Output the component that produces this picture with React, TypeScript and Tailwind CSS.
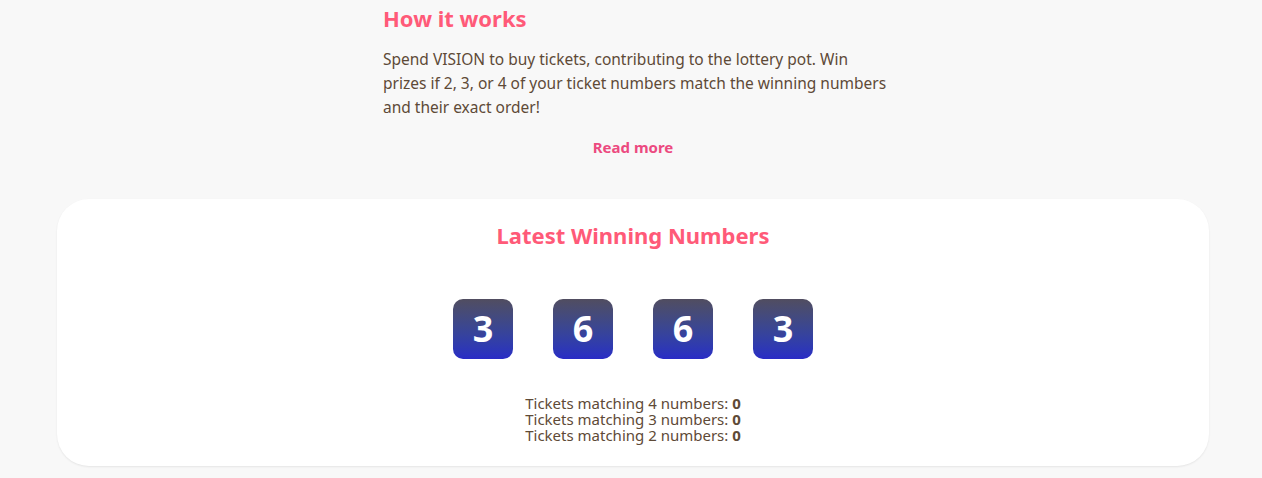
const numbers = [3, 6, 6, 3];
const matches = [4, 3, 2];

export default function App() {
  return (
    <div
      className="min-h-[478px] w-full bg-[#f8f8f8] overflow-hidden text-[#5e4a37]"
      style={{ fontFamily: "'Noto Sans', 'Open Sans', sans-serif" }}
    >
      <div className="ml-[383px] w-[500px]">
        <h2 className="pt-[2px] text-[22px] leading-[32px] font-bold text-[#ff5a78]">How it works</h2>
        <p className="mt-[13px] w-[506px] text-[15.5px] leading-[24px]">
          Spend VISION to buy tickets, contributing to the lottery pot. Win prizes if 2, 3, or 4 of your ticket numbers
          match the winning numbers and their exact order!
        </p>
        <div className="mt-[16px] text-center">
          <a className="text-[15px] leading-[24px] font-bold text-[#ec4a80]">Read more</a>
        </div>
      </div>

      <div className="ml-[57px] mt-[40px] w-[1152px] h-[267px] rounded-[32px] bg-white shadow-[0_1px_2px_rgba(0,0,0,0.08)] flex flex-col items-center">
        <h2 className="mt-[20px] text-[22px] leading-[32px] font-bold text-[#ff5a78]">
          Latest Winning Numbers
        </h2>
        <div className="mt-[48px] flex gap-[40px]">
          {numbers.map((n, i) => (
            <div
              key={i}
              className="w-[60px] h-[60px] rounded-[10px] bg-gradient-to-b from-[#514d60] to-[#2a2bc6] flex items-center justify-center text-white text-[36px] font-bold"
            >
              {n}
            </div>
          ))}
        </div>
        <div className="mt-[36px] text-[15px] leading-[16px] text-center">
          {matches.map((m) => (
            <div key={m}>
              Tickets matching {m} numbers: <span className="font-bold">0</span>
            </div>
          ))}
        </div>
      </div>
    </div>
  );
}
